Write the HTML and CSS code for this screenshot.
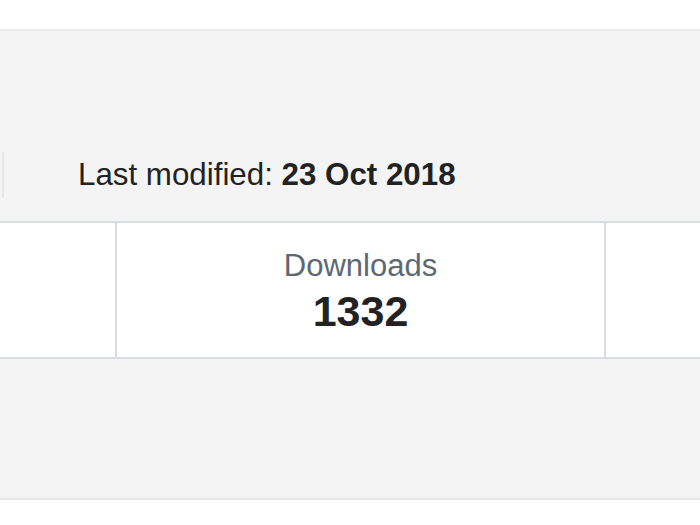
FILE: index.html
```html
<!DOCTYPE html>
<html lang="en">
<head>
    <meta charset="UTF-8">
    <meta name="viewport" content="width=device-width, initial-scale=1.0">
    <title>Package details</title>
    <link rel="stylesheet" href="styles.css">
</head>
<body>

    <div class="top-bar"></div>

    <section class="summary">
        <div class="meta-row">
            <div class="meta-divider"></div>
            <p class="meta-item">Last modified: <strong>23 Oct 2018</strong></p>
        </div>
    </section>

    <section class="stats">
        <div class="stat stat-side"></div>
        <div class="stat">
            <div class="stat-label">Downloads</div>
            <div class="stat-value">1332</div>
        </div>
        <div class="stat stat-side"></div>
    </section>

    <section class="details"></section>

</body>
</html>
```

FILE: styles.css
```css
body {
    font-family: "Liberation Sans", Arial, sans-serif;
    margin: 0;
    background-color: #fff;
    color: #222;
}
.top-bar {
    height: 29px;
}
.summary {
    height: 190px;
    background-color: #f4f4f4;
    border-top: 2px solid #ebebeb;
    display: flex;
    flex-direction: column;
    justify-content: flex-end;
}
.meta-row {
    display: flex;
    align-items: center;
    height: 46px;
    margin-bottom: 23px;
}
.meta-divider {
    width: 2px;
    height: 46px;
    margin-left: 2px;
    background-color: #e8e8e8;
}
.meta-item {
    margin: 0 0 0 74px;
    font-size: 31.3px;
}
.stats {
    display: grid;
    grid-template-columns: 115px 487px 1fr;
    column-gap: 2px;
    background-color: #d9dde1;
    border-top: 2px solid #d9dde1;
    border-bottom: 2px solid #d9dde1;
    height: 134px;
}
.stat {
    background-color: #fff;
    text-align: center;
    padding-top: 25px;
}
.stat-label {
    font-size: 31px;
    line-height: 36px;
    color: #5e6873;
}
.stat-value {
    font-size: 43px;
    line-height: 54px;
    font-weight: bold;
}
.details {
    height: 139px;
    background-color: #f4f4f4;
    border-bottom: 2px solid #e8e8e8;
}
```
